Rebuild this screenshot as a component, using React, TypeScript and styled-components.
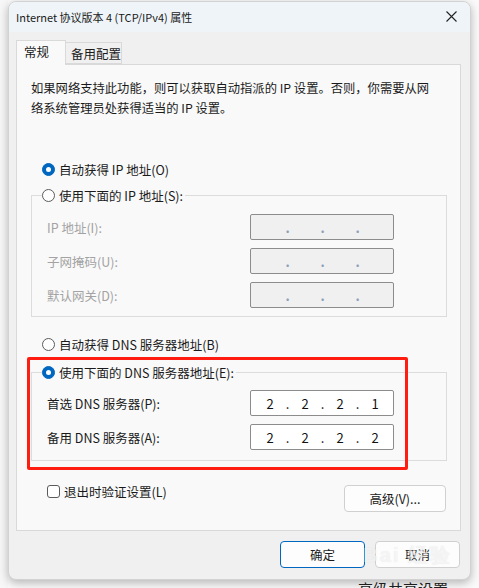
import React from 'react'
import styled, { createGlobalStyle } from 'styled-components'

const GlobalStyle = createGlobalStyle`
  html, body {
    margin: 0;
    padding: 0;
    background: #f4f4f4;
  }
  * { box-sizing: border-box; }
`

const Screen = styled.div`
  width: 479px;
  height: 588px;
  overflow: hidden;
  padding: 1px 0 0 8px;
  font-family: "Noto Sans CJK SC", "Noto Sans", sans-serif;
  font-size: 12.5px;
  color: #1a1a1a;
  background: linear-gradient(90deg, #f7f7f7 0, #f7f7f7 8px, #fafafa 8px);
`

const Dialog = styled.div`
  position: relative;
  width: 463px;
  height: 579px;
  border-radius: 8px;
  background: #f0f0f0;
  border: 1px solid #d2d2d2;
  box-shadow: 0 3px 10px rgba(0, 0, 0, 0.28);
  overflow: hidden;
  display: flex;
  flex-direction: column;
`

const TitleBar = styled.div`
  height: 30px;
  flex-shrink: 0;
  background: #eef4f8;
  display: flex;
  align-items: center;
  justify-content: space-between;
  padding: 0 13px 1px 7px;
`

const Title = styled.span`
  font-size: 11px;
  line-height: 28px;
  color: #1a1a1a;
`

const CloseIcon = () => (
  <svg width="11" height="11" viewBox="0 0 11 11">
    <path d="M0.5 0.5 L10.5 10.5 M10.5 0.5 L0.5 10.5" stroke="#222" strokeWidth="1.1" fill="none" />
  </svg>
)

const Body = styled.div`
  padding: 8px 9px 0 7px;
  display: flex;
  flex-direction: column;
`

const TabRow = styled.div`
  height: 24px;
  display: flex;
  align-items: flex-end;
`

const Tab = styled.div<{ active: boolean }>`
  height: ${({ active }) => (active ? '25px' : '22px')};
  margin-bottom: ${({ active }) => (active ? '-1px' : '0')};
  padding: 0 ${({ active }) => (active ? '7px' : '5px')};
  width: ${({ active }) => (active ? '50px' : '56px')};
  background: ${({ active }) => (active ? '#f9f9f9' : '#f0f0f0')};
  border: 1px solid #d9d9d9;
  border-bottom: ${({ active }) => (active ? 'none' : '1px solid #d9d9d9')};
  border-left: ${({ active }) => (active ? '1px solid #d9d9d9' : 'none')};
  position: relative;
  z-index: ${({ active }) => (active ? 2 : 1)};
  font-size: 12.5px;
  line-height: ${({ active }) => (active ? '22px' : '21px')};
  white-space: nowrap;
`

const Panel = styled.div`
  position: relative;
  width: 445px;
  height: 467px;
  background: #f9f9f9;
  border: 1px solid #d9d9d9;
  padding: 13px 13px 0 14px;
  display: flex;
  flex-direction: column;
`

const Description = styled.p`
  margin: 0;
  line-height: 20px;
  font-size: 12.3px;
  white-space: nowrap;
`

const RadioRow = styled.label<{ gap: number }>`
  display: flex;
  align-items: center;
  height: 20px;
  margin-top: ${({ gap }) => gap}px;
  padding-left: 11px;
  gap: 4px;
  white-space: nowrap;
`

const RadioMark = styled.span<{ checked: boolean }>`
  width: 13px;
  height: 13px;
  border-radius: 50%;
  flex-shrink: 0;
  display: inline-flex;
  align-items: center;
  justify-content: center;
  background: ${({ checked }) => (checked ? '#0067c0' : '#ffffff')};
  border: 1px solid ${({ checked }) => (checked ? '#0067c0' : '#5b5b5b')};
  &::after {
    content: '';
    display: ${({ checked }) => (checked ? 'block' : 'none')};
    width: 5px;
    height: 5px;
    border-radius: 50%;
    background: #ffffff;
  }
`

const Group = styled.fieldset<{ top: number; bottom: number; gapTop: number }>`
  margin: ${({ gapTop }) => gapTop}px 0 0 0;
  min-width: 0;
  width: 416px;
  border: 1px solid #dcdcdc;
  padding: ${({ top }) => top}px 52px ${({ bottom }) => bottom}px 15px;
  display: flex;
  flex-direction: column;
  gap: 8px;
`

const GroupLegend = styled.legend`
  margin-left: -5px;
  padding: 0 2px 0 0;
  height: 20px;
  display: flex;
  align-items: center;
  gap: 4px;
  white-space: nowrap;
`

const FieldRow = styled.div`
  display: grid;
  grid-template-columns: 203px 144px;
  align-items: center;
  height: 26px;
`

const FieldLabel = styled.span<{ disabled: boolean }>`
  color: ${({ disabled }) => (disabled ? '#a3a3a3' : '#1a1a1a')};
  white-space: nowrap;
`

const IpBox = styled.div<{ disabled: boolean }>`
  width: 144px;
  height: 26px;
  border: 1px solid #8c8c8c;
  border-radius: 2px;
  background: ${({ disabled }) => (disabled ? '#f0f0f0' : '#ffffff')};
  display: grid;
  grid-template-columns: 28px 7px 28px 7px 28px 7px 28px;
  align-items: center;
  padding-left: 5px;
  font-size: 13px;
`

const Octet = styled.span`
  text-align: center;
  color: #111;
`

const Dot = styled.span<{ disabled: boolean }>`
  text-align: center;
  color: ${({ disabled }) => (disabled ? '#8aa0b8' : '#111')};
  font-weight: ${({ disabled }) => (disabled ? 700 : 400)};
`

const BottomRow = styled.div`
  margin-top: 20px;
  display: flex;
  justify-content: space-between;
  align-items: flex-start;
  padding-right: 1px;
`

const CheckLabel = styled.label`
  margin-left: 16px;
  height: 20px;
  display: flex;
  align-items: center;
  gap: 4px;
  white-space: nowrap;
`

const CheckMark = styled.span`
  width: 13px;
  height: 13px;
  border: 1px solid #5b5b5b;
  border-radius: 3px;
  background: #ffffff;
`

const Button = styled.div<{ primary?: boolean; w: number }>`
  width: ${({ w }) => w}px;
  height: 27px;
  border-radius: 4px;
  background: #fdfdfd;
  border: 1px solid ${({ primary }) => (primary ? '#0067c0' : '#d0d0d0')};
  display: flex;
  align-items: center;
  justify-content: center;
  font-size: 12.5px;
  white-space: nowrap;
`

const AdvancedButton = styled(Button)`
  margin-top: 4px;
`

const Footer = styled.div`
  margin-top: 10px;
  display: flex;
  justify-content: flex-end;
  gap: 10px;
  padding-right: 1px;
`

const Highlight = styled.div`
  position: absolute;
  left: 10px;
  top: 292px;
  width: 381px;
  height: 113px;
  border: 3px solid #ff1d12;
  border-radius: 2px;
  pointer-events: none;
`

const Watermark = styled.div`
  position: absolute;
  right: 18px;
  bottom: 10px;
  font-family: "Liberation Sans", sans-serif;
  font-size: 20px;
  font-weight: 700;
  color: rgba(255, 255, 255, 0.6);
  text-shadow: 0 0 1px rgba(150, 150, 150, 0.25);
  pointer-events: none;
  letter-spacing: 2px;
`

const Behind = styled.div`
  margin: -1px 0 0 350px;
  font-size: 15px;
  line-height: 20px;
  color: #222;
  white-space: nowrap;
`

const IpField = ({ value, disabled }: { value: string[]; disabled: boolean }) => (
  <IpBox disabled={disabled}>
    <Octet>{value[0]}</Octet>
    <Dot disabled={disabled}>.</Dot>
    <Octet>{value[1]}</Octet>
    <Dot disabled={disabled}>.</Dot>
    <Octet>{value[2]}</Octet>
    <Dot disabled={disabled}>.</Dot>
    <Octet>{value[3]}</Octet>
  </IpBox>
)

const empty = ['', '', '', '']

const ipRows = [
  { label: 'IP 地址(I):', value: empty },
  { label: '子网掩码(U):', value: empty },
  { label: '默认网关(D):', value: empty },
]

const dnsRows = [
  { label: '首选 DNS 服务器(P):', value: ['2', '2', '2', '1'] },
  { label: '备用 DNS 服务器(A):', value: ['2', '2', '2', '2'] },
]

const App = () => {
  return (
    <>
      <GlobalStyle />
      <Screen>
        <Dialog>
          <TitleBar>
            <Title>Internet 协议版本 4 (TCP/IPv4) 属性</Title>
            <CloseIcon />
          </TitleBar>
          <Body>
            <TabRow>
              <Tab active={true}>常规</Tab>
              <Tab active={false}>备用配置</Tab>
            </TabRow>
            <Panel>
              <Description>
                如果网络支持此功能，则可以获取自动指派的 IP 设置。否则，你需要从网
                <br />
                络系统管理员处获得适当的 IP 设置。
              </Description>

              <RadioRow gap={41}>
                <RadioMark checked={true} />
                自动获得 IP 地址(O)
              </RadioRow>
              <Group top={9} bottom={8} gapTop={6}>
                <GroupLegend>
                  <RadioMark checked={false} />
                  使用下面的 IP 地址(S):
                </GroupLegend>
                {ipRows.map((row) => (
                  <FieldRow key={row.label}>
                    <FieldLabel disabled={true}>{row.label}</FieldLabel>
                    <IpField value={row.value} disabled={true} />
                  </FieldRow>
                ))}
              </Group>

              <RadioRow gap={17}>
                <RadioMark checked={false} />
                自动获得 DNS 服务器地址(B)
              </RadioRow>
              <Group top={8} bottom={10} gapTop={8}>
                <GroupLegend>
                  <RadioMark checked={true} />
                  使用下面的 DNS 服务器地址(E):
                </GroupLegend>
                {dnsRows.map((row) => (
                  <FieldRow key={row.label}>
                    <FieldLabel disabled={false}>{row.label}</FieldLabel>
                    <IpField value={row.value} disabled={false} />
                  </FieldRow>
                ))}
              </Group>

              <BottomRow>
                <CheckLabel>
                  <CheckMark />
                  退出时验证设置(L)
                </CheckLabel>
                <AdvancedButton w={102}>高级(V)...</AdvancedButton>
              </BottomRow>

              <Highlight />
            </Panel>
            <Footer>
              <Button primary w={85}>确定</Button>
              <Button w={85}>取消</Button>
            </Footer>
          </Body>
          <Watermark>Bai 经验</Watermark>
        </Dialog>
        <Behind>高级共享设置</Behind>
      </Screen>
    </>
  )
}

export default App
